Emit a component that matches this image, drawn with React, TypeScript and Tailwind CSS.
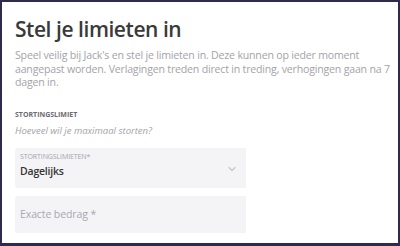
import * as React from 'react';
import { ChevronDown } from 'lucide-react';

export default function App() {
  return (
    <div
      className="h-[246px] w-[400px] overflow-hidden border-x-2 border-t-2 border-b-[3px] border-[#2e2b4c] bg-white"
      style={{ fontFamily: '"Open Sans", "Noto Sans", sans-serif' }}
    >
      <div className="pl-[13px] pr-[2px] pt-[13px]">
        <h1 className="text-[21px] font-semibold leading-[28px] tracking-[-0.45px] text-[#3a3a3a]">
          Stel je limieten in
        </h1>
        <p className="mt-[6px] text-[10.6px] leading-[13.5px] tracking-[-0.2px] text-[#a3a3a8]">
          Speel veilig bij Jack's en stel je limieten in. Deze kunnen op ieder moment aangepast worden.
          Verlagingen treden direct in treding, verhogingen gaan na 7 dagen in.
        </p>

        <div className="mt-[20px] text-[7px] font-bold uppercase leading-[10px] text-[#6b6b70]">
          Stortingslimiet
        </div>
        <div className="mt-[5px] text-[9.5px] italic leading-[12px] text-[#a3a3a8]">
          Hoeveel wil je maximaal storten?
        </div>

        <div className="mt-[11px] w-[231px]">
          <div className="flex h-[40px] items-start justify-between rounded-[2px] bg-[#f4f4f7] pl-[5px] pr-[8px] pt-[4px]">
            <div className="flex flex-col">
              <span className="text-[7px] uppercase leading-[10px] tracking-[-0.1px] text-[#a3a3a8]">Stortingslimieten*</span>
              <span className="mt-[2px] text-[10.5px] font-semibold leading-[14px] tracking-[-0.2px] text-[#333333]">Dagelijks</span>
            </div>
            <ChevronDown className="mt-[11px] h-[12px] w-[12px] text-[#c8c8cc]" strokeWidth={2.5} />
          </div>
          <div className="mt-[8px] flex h-[37px] items-center rounded-[2px] bg-[#f4f4f7] pl-[5px]">
            <span className="text-[10.5px] leading-[14px] tracking-[-0.1px] text-[#a8a8ad]">Exacte bedrag *</span>
          </div>
        </div>
      </div>
    </div>
  );
}
